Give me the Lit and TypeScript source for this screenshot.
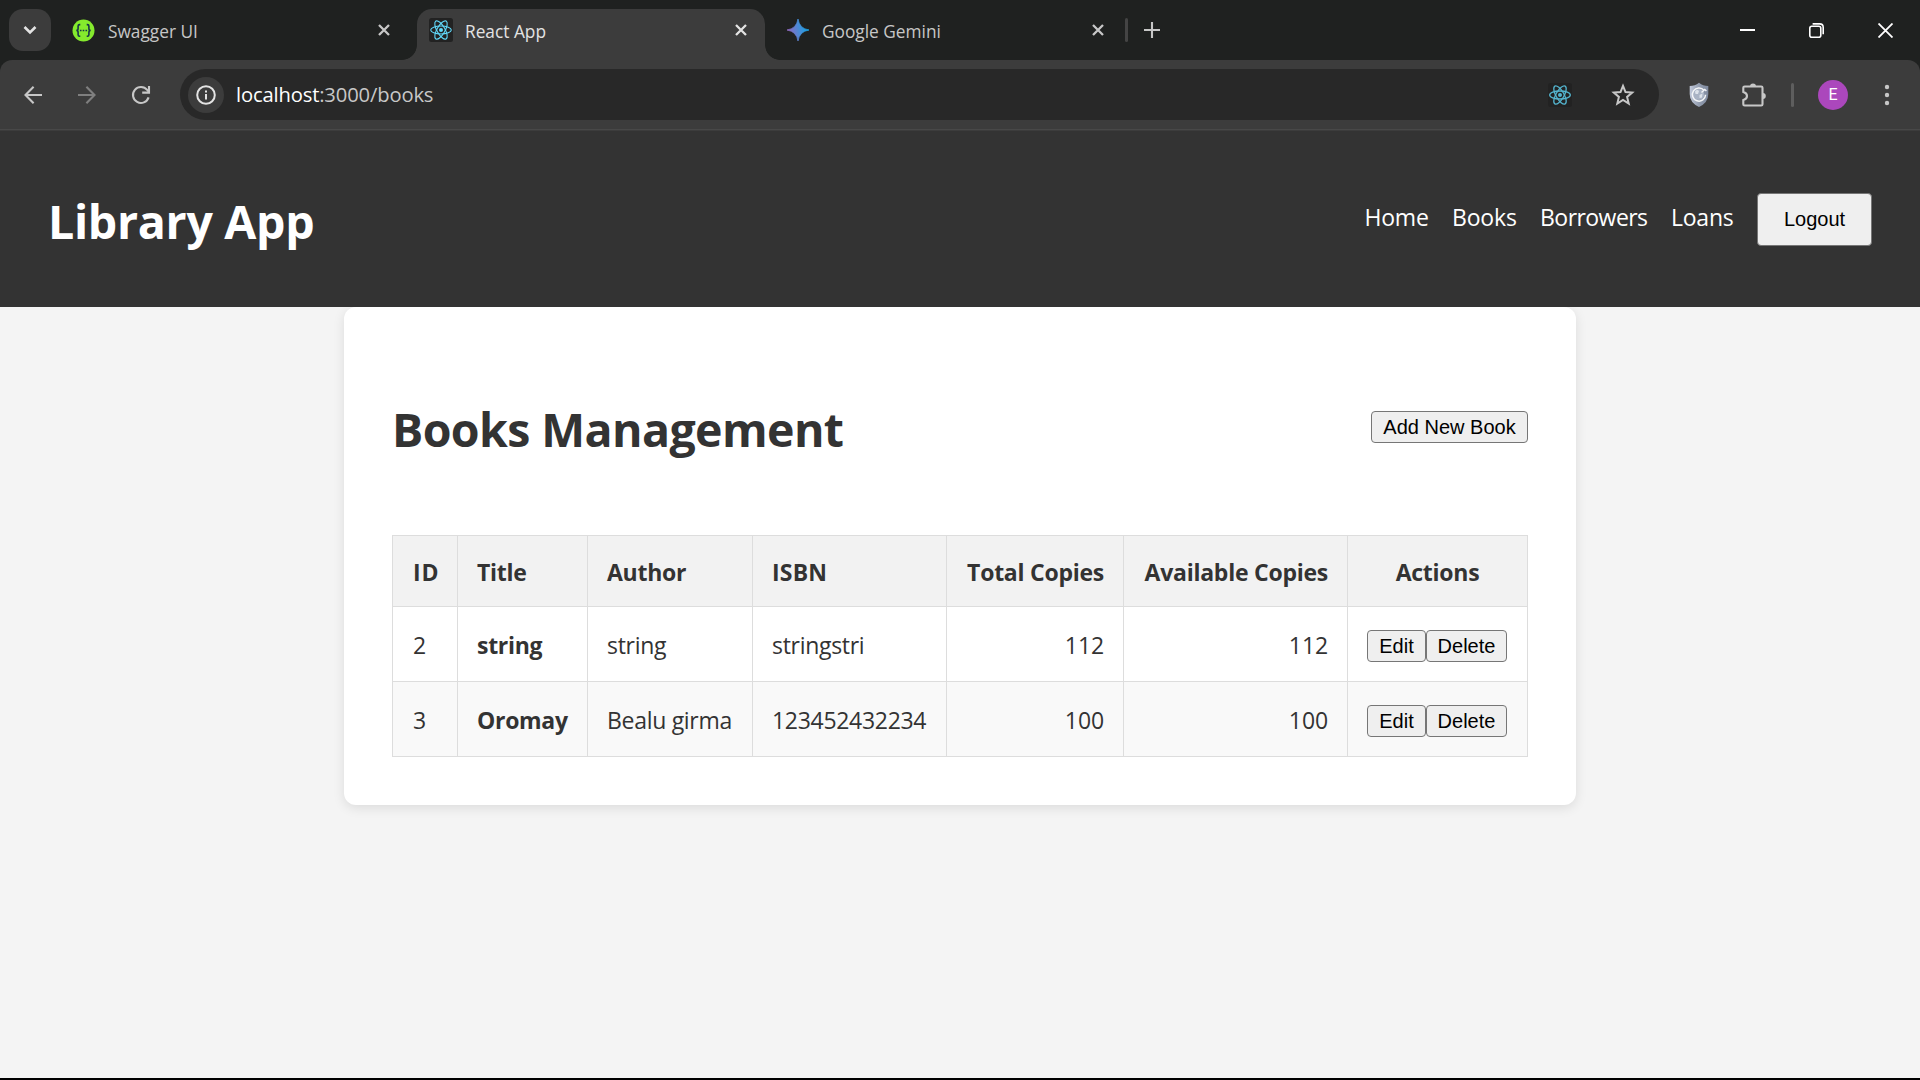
import { LitElement, html, css, svg } from "lit";
import { customElement, property } from "lit/decorators.js";

const atom = (stroke: number) => svg`
  <g fill="none" stroke="#61dafb" stroke-width=${stroke}>
    <ellipse cx="12" cy="12" rx="10.3" ry="4"></ellipse>
    <ellipse cx="12" cy="12" rx="10.3" ry="4" transform="rotate(60 12 12)"></ellipse>
    <ellipse cx="12" cy="12" rx="10.3" ry="4" transform="rotate(120 12 12)"></ellipse>
  </g>
  <circle cx="12" cy="12" r="2" fill="#61dafb"></circle>`;

const cross = html`<svg class="cross" width="12" height="12" viewBox="0 0 12 12">
  <path d="M1 1L11 11M11 1L1 11" fill="none" stroke="currentColor" stroke-width="2.3"></path>
</svg>`;

@customElement("browser-chrome")
class BrowserChrome extends LitElement {
  static styles = css`
    :host { display: block; background: #1f2120; font-family: "Open Sans", "Noto Sans", sans-serif; }
    svg { display: block; flex: none; }
    .strip { display: flex; height: 60px; align-items: center; padding-left: 9px; box-sizing: border-box; }
    .search { width: 42px; height: 42px; border-radius: 14px; background: #3c3c3c; display: flex; align-items: center; justify-content: center; }
    .tab { display: flex; align-items: center; height: 60px; box-sizing: border-box; color: #c7c7c7; font-size: 17.3px; white-space: nowrap; }
    .tab .label { flex: 1; padding: 3px 0 0 12px; }
    .swagger { width: 318px; margin-left: 21px; }
    .swagger .label { padding-left: 13px; }
    .active { width: 348px; height: 51px; margin-left: 27px; align-self: flex-end; background: #3c3c3c; border-radius: 15px 15px 0 0; padding: 0 18px 9px 12px; color: #e3e3e3; position: relative; }
    .active::before, .active::after { content: ""; position: absolute; bottom: 0; width: 15px; height: 15px; }
    .active::before { left: -15px; background: radial-gradient(circle at 0 0, #1f2120 14.5px, #3c3c3c 15.2px); }
    .active::after { right: -15px; background: radial-gradient(circle at 100% 0, #1f2120 14.5px, #3c3c3c 15.2px); }
    .gemini { width: 317px; margin-left: 22px; }
    .gemini .label { padding-left: 13px; }
    .sep { width: 3px; height: 24px; border-radius: 2px; background: #444; margin-left: 21px; }
    .plus { margin-left: 16px; }
    .window { display: flex; align-items: center; gap: 54px; margin: 0 27px 0 auto; color: #fff; }
    .toolbar { display: flex; align-items: center; height: 71px; box-sizing: border-box; padding: 0 25px 2px 24px; border-radius: 12px 12px 0 0; background: #3c3c3c; color: #c7c7c7; box-shadow: inset 0 -1px #3c3c3c, inset 0 -2px #484848; }
    .fwd { margin-left: 36px; color: #7f7f7f; }
    .reload { margin-left: 35px; }
    .omnibox { display: flex; align-items: center; width: 1479px; height: 51px; margin-left: 29px; border-radius: 26px; background: #282828; box-sizing: border-box; padding: 0 24px 0 8px; }
    .info { width: 36px; height: 36px; border-radius: 50%; background: #3c3c3c; display: flex; align-items: center; justify-content: center; }
    .url { flex: 1; padding-left: 12px; font-size: 20.2px; letter-spacing: -0.15px; color: #c7c7c7; line-height: 50px; padding-bottom: 2px; }
    .url .host { color: #fff; }
    .star { margin-left: 39px; }
    .shield { margin-left: 28px; }
    .puzzle { margin-left: 30px; }
    .divider { width: 3px; height: 24px; border-radius: 2px; background: #5e5e5e; margin-left: 24px; }
    .avatar { width: 30px; height: 30px; border-radius: 50%; background: #ab47bc; color: #fff; margin-left: 24px; text-align: center; font: 16px/30px Roboto, "Liberation Sans", sans-serif; }
    .menu { margin-left: auto; }
  `;

  render() {
    return html`
      <div class="strip">
        <div class="search">
          <svg width="14" height="10" viewBox="0 0 14 10"><path d="M1.5 2L7 7.5L12.5 2" fill="none" stroke="#e3e3e3" stroke-width="2.6"></path></svg>
        </div>
        <div class="tab swagger">
          <svg width="23" height="23" viewBox="0 0 23 23">
            <circle cx="11.5" cy="11.5" r="11" fill="#85ea2d"></circle>
            <path d="M8.3 5.6H7.6Q6.1 5.6 6.1 7.1V9.4Q6.1 11.4 4.3 11.4Q6.1 11.4 6.1 13.4V15.7Q6.1 17.3 7.6 17.3H8.3M14.7 5.6H15.4Q16.9 5.6 16.9 7.1V9.4Q16.9 11.4 18.7 11.4Q16.9 11.4 16.9 13.4V15.7Q16.9 17.3 15.4 17.3H14.7" fill="none" stroke="#173647" stroke-width="1.6"></path>
            <path d="M7.9 10.7h1.6v1.6H7.9zM10.7 10.7h1.6v1.6h-1.6zM13.5 10.7h1.6v1.6h-1.6z" fill="#173647"></path>
          </svg>
          <span class="label">Swagger UI</span>${cross}
        </div>
        <div class="tab active">
          <svg width="24" height="24" viewBox="0 0 24 24"><rect width="24" height="24" rx="2.5" fill="#222"></rect>${atom(1.1)}</svg>
          <span class="label">React App</span>${cross}
        </div>
        <div class="tab gemini">
          <svg width="22" height="22" viewBox="0 0 22 22">
            <defs><linearGradient id="g" x1="0" y1="0.6" x2="1" y2="0.4"><stop offset="0.05" stop-color="#9168c0"></stop><stop offset="0.45" stop-color="#5684d1"></stop><stop offset="0.9" stop-color="#1ba1e3"></stop></linearGradient></defs>
            <path d="M11 0Q12.4 9.6 22 11Q12.4 12.4 11 22Q9.6 12.4 0 11Q9.6 9.6 11 0Z" fill="url(#g)" stroke="url(#g)" stroke-width="0.8"></path>
          </svg>
          <span class="label">Google Gemini</span>${cross}
        </div>
        <div class="sep"></div>
        <svg class="plus" width="16" height="16" viewBox="0 0 16 16"><path d="M8 0V16M0 8H16" fill="none" stroke="#c7c7c7" stroke-width="2.1"></path></svg>
        <div class="window">
          <svg width="15" height="15" viewBox="0 0 15 15"><path d="M0 7H15" stroke="currentColor" stroke-width="2"></path></svg>
          <svg width="15" height="15" viewBox="0 0 15 15"><g fill="none" stroke="currentColor" stroke-width="1.6"><rect x="0.8" y="3.2" width="11" height="11" rx="2"></rect><path d="M3.6 0.9H10.6Q14.2 0.9 14.2 4.5V11.3"></path></g></svg>
          <svg width="15" height="15" viewBox="0 0 15 15"><path d="M0.5 0.5L14.5 14.5M14.5 0.5L0.5 14.5" stroke="currentColor" stroke-width="1.8"></path></svg>
        </div>
      </div>
      <div class="toolbar">
        <svg width="18" height="18" viewBox="0 0 18 18"><path d="M18 9H1.8M9.6 0.8L1.5 9L9.6 17.2" fill="none" stroke="currentColor" stroke-width="2.1"></path></svg>
        <svg class="fwd" width="18" height="18" viewBox="0 0 18 18"><path d="M0 9H16.2M8.4 0.8L16.5 9L8.4 17.2" fill="none" stroke="currentColor" stroke-width="2.1"></path></svg>
        <svg class="reload" width="20" height="20" viewBox="0 0 20 20"><path d="M17.6 12.4A8 8 0 1 1 16.2 4.9L18 7" fill="none" stroke="currentColor" stroke-width="2.1"></path><path d="M18 1V7.6H11.2" fill="none" stroke="currentColor" stroke-width="2.1"></path></svg>
        <div class="omnibox">
          <div class="info">
            <svg width="20" height="20" viewBox="0 0 20 20"><circle cx="10" cy="10" r="8.8" fill="none" stroke="#e3e3e3" stroke-width="2"></circle><path d="M9 8.9h2v5.6H9zM9 5.4h2v2H9z" fill="#e3e3e3"></path></svg>
          </div>
          <div class="url"><span class="host">localhost</span>:3000/books</div>
          <svg width="24" height="24" viewBox="0 0 24 24"><rect width="24" height="24" rx="2.5" fill="#222"></rect><g opacity="0.8">${atom(1.3)}</g></svg>
          <svg class="star" width="24" height="24" viewBox="0 0 24 24"><path d="M12 2.9L14.5 9.1L21.2 9.6L16.1 13.9L17.7 20.6L12 17L6.3 20.6L7.9 13.9L2.8 9.6L9.5 9.1Z" fill="none" stroke="currentColor" stroke-width="2"></path></svg>
        </div>
        <svg class="shield" width="24" height="26" viewBox="0 0 24 26">
          <defs><linearGradient id="s"><stop offset="0" stop-color="#c3cbdc"></stop><stop offset="0.5" stop-color="#929cae"></stop><stop offset="1" stop-color="#808ba0"></stop></linearGradient></defs>
          <path d="M12 0.8Q16 4 21.3 4V12Q21.3 20.5 12 25Q2.7 20.5 2.7 12V4Q8 4 12 0.8Z" fill="url(#s)"></path>
          <circle cx="12" cy="12.4" r="5.3" fill="#a9b3c4"></circle>
          <path d="M8 9.5Q10 7 12 9L11 12L8.5 12ZM12.5 13L15.5 11.5L15 15.5L12.5 16Z" fill="#dce2ea"></path>
          <path d="M17 8.2A6.6 6.6 0 1 0 18.6 12.8" fill="none" stroke="#f4f6f8" stroke-width="1.5"></path>
          <path d="M14.5 10.6L17.8 7.4L19.4 9" fill="none" stroke="#f4f6f8" stroke-width="1.4"></path>
        </svg>
        <svg class="puzzle" width="26" height="26" viewBox="0 0 26 26">
          <path d="M3.6 4.5H20.2Q21.5 4.5 21.5 5.8V22.2Q21.5 23.5 20.2 23.5H3.6Q2.3 23.5 2.3 22.2V18Q6 17 6 14Q6 11 2.3 10V5.8Q2.3 4.5 3.6 4.5Z" fill="none" stroke="currentColor" stroke-width="2.1"></path>
          <path d="M9 4.4A3 3 0 0 1 15 4.4ZM21.8 11A3 3 0 0 1 21.8 17Z" fill="currentColor"></path>
        </svg>
        <div class="divider"></div>
        <div class="avatar">E</div>
        <svg class="menu" width="16" height="22" viewBox="0 0 16 22" fill="currentColor"><circle cx="8" cy="3" r="2.2"></circle><circle cx="8" cy="11" r="2.2"></circle><circle cx="8" cy="19" r="2.2"></circle></svg>
      </div>
    `;
  }
}

interface Book {
  id: number;
  title: string;
  author: string;
  isbn: string;
  total: number;
  available: number;
}

@customElement("books-table")
class BooksTable extends LitElement {
  @property({ attribute: false }) books: Book[] = [];

  static styles = css`
    :host { display: block; }
    table { width: 1136px; table-layout: fixed; border-collapse: collapse; letter-spacing: -0.3px; }
    th, td { border: 1px solid #ddd; padding: 1px 19px 0; box-sizing: border-box; text-align: left; line-height: 30px; white-space: nowrap; }
    th { height: 71px; background: #f2f2f2; font-weight: 700; letter-spacing: -0.25px; }
    td { height: 75px; }
    td.actions { padding-top: 3px; }
    tbody tr:nth-child(even) { background: #f9f9f9; }
    .id { width: 65px; }
    .title { width: 130px; }
    .author { width: 165px; }
    .isbn { width: 194px; }
    .total { width: 177px; }
    .available { width: 224px; }
    .id, td:first-child { padding-left: 20px; }
    th.id { letter-spacing: 0.8px; }
    th.isbn { letter-spacing: 0.2px; }
    .num { text-align: right; }
    td.num { letter-spacing: -0.1px; }
    .strong { font-weight: 700; }
    th.center { text-align: center; }
    .buttons { display: flex; }
    button { box-sizing: border-box; height: 32px; padding: 0; text-align: center; border: 1px solid #767676; border-radius: 4px; background: #efefef; color: #000; font: 20px/30px "Liberation Sans", Arial, sans-serif; letter-spacing: 0; }
    .edit { width: 59px; }
    .delete { width: 81px; }
  `;

  render() {
    return html`
      <table>
        <thead>
          <tr>
            <th class="id">ID</th>
            <th class="title">Title</th>
            <th class="author">Author</th>
            <th class="isbn">ISBN</th>
            <th class="total num">Total Copies</th>
            <th class="available num">Available Copies</th>
            <th class="center">Actions</th>
          </tr>
        </thead>
        <tbody>
          ${this.books.map(
            (b) => html`<tr>
              <td>${b.id}</td>
              <td class="strong">${b.title}</td>
              <td>${b.author}</td>
              <td>${b.isbn}</td>
              <td class="num">${b.total}</td>
              <td class="num">${b.available}</td>
              <td class="actions"><div class="buttons"><button class="edit">Edit</button><button class="delete">Delete</button></div></td>
            </tr>`
          )}
        </tbody>
      </table>
    `;
  }
}

@customElement("app-root")
class AppRoot extends LitElement {
  static styles = css`
    :host { display: flex; flex-direction: column; height: 1080px; box-sizing: border-box; overflow: hidden; background: #f4f4f4; border-bottom: 2px solid #000; color: #333; font: 23px/34px "Open Sans", "Noto Sans", sans-serif; }
    .header { display: flex; align-items: center; justify-content: space-between; height: 176px; flex: none; box-sizing: border-box; padding: 0 48px; background: #333; color: #fff; position: relative; }
    h1 { margin: 0; font-size: 46.5px; line-height: 64px; font-weight: 700; letter-spacing: -0.6px; padding-top: 4px; white-space: nowrap; }
    .header h1 { letter-spacing: -0.3px; }
    nav { display: flex; align-items: center; gap: 23.4px; padding-top: 1px; }
    nav a { color: #fff; text-decoration: none; padding-bottom: 5px; letter-spacing: -0.2px; }
    nav .tight { letter-spacing: -0.55px; }
    button { box-sizing: border-box; padding: 0; border: 1px solid #767676; border-radius: 4px; background: #efefef; color: #000; font: 20px/30px "Liberation Sans", Arial, sans-serif; }
    .logout { width: 115px; height: 53px; padding-bottom: 2px; }
    .add { width: 157px; height: 32px; }
    .card { width: 1232px; height: 498px; flex: none; box-sizing: border-box; margin: 0 auto; padding: 80px 48px 0; border-radius: 12px; background: #fff; box-shadow: 0 3px 12px rgba(0, 0, 0, 0.1); }
    .head { display: flex; align-items: center; justify-content: space-between; height: 80px; margin-bottom: 68px; }
  `;

  private books: Book[] = [
    { id: 2, title: "string", author: "string", isbn: "stringstri", total: 112, available: 112 },
    { id: 3, title: "Oromay", author: "Bealu girma", isbn: "123452432234", total: 100, available: 100 },
  ];

  render() {
    return html`
      <browser-chrome></browser-chrome>
      <header class="header">
        <h1>Library App</h1>
        <nav>
          <a>Home</a><a>Books</a><a class="tight">Borrowers</a><a>Loans</a>
          <button class="logout">Logout</button>
        </nav>
      </header>
      <main class="card">
        <div class="head">
          <h1>Books Management</h1>
          <button class="add">Add New Book</button>
        </div>
        <books-table .books=${this.books}></books-table>
      </main>
    `;
  }
}
